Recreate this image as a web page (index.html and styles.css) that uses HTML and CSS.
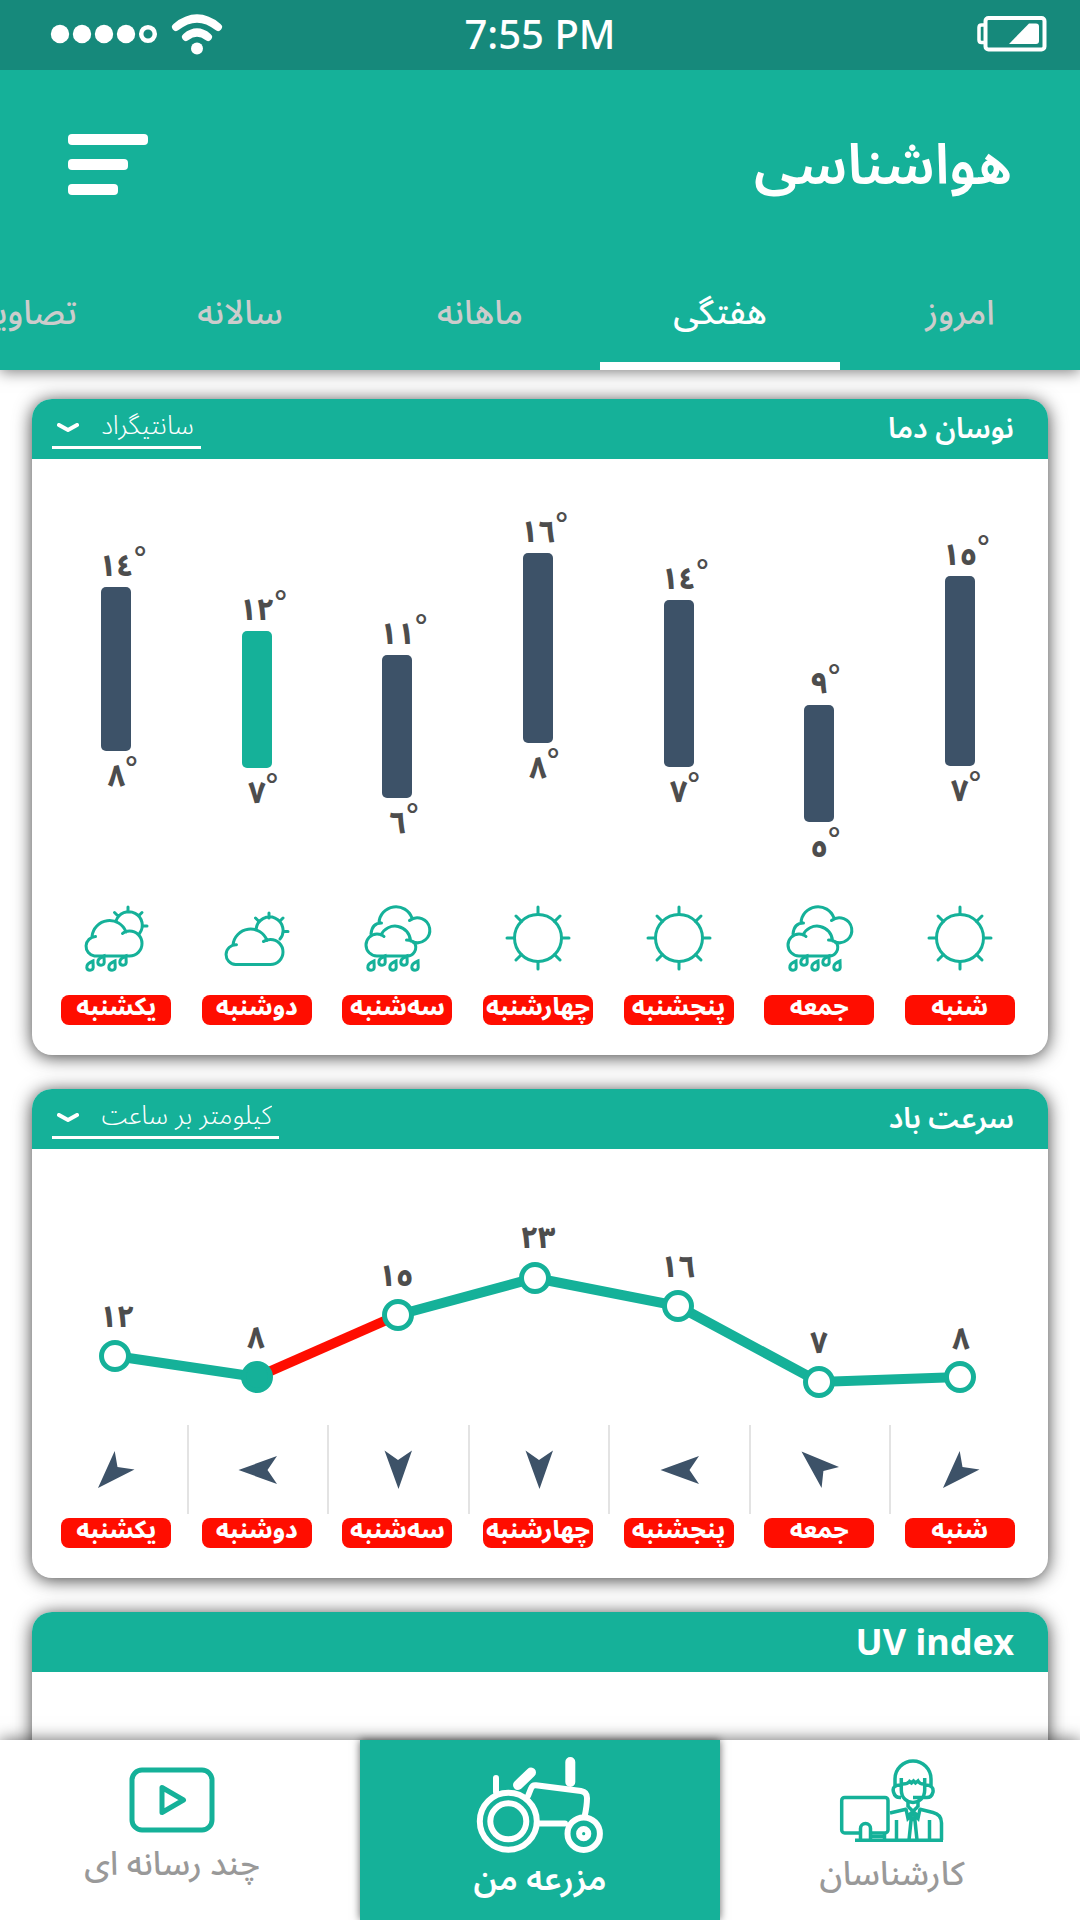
FILE: index.html
```html
<!DOCTYPE html>
<html lang="fa" dir="rtl">
<head>
<meta charset="utf-8">
<meta name="viewport" content="width=device-width, initial-scale=1">
<title>هواشناسی</title>
<link rel="stylesheet" href="styles.css">
</head>
<body>
<svg class="defs" aria-hidden="true">
  <symbol id="drop" viewBox="0 0 12 14" overflow="visible">
    <path d="M8 2C3 4 1.6 6.500 1.800 8.500C2.100 12 8 12 8.200 8.500Z"/>
  </symbol>
  <symbol id="sun" viewBox="0 0 66 66">
    <circle cx="33" cy="33" r="23.500"/>
    <path d="M33 2V9M33 57V64M2 33H9M57 33H64M11 11L16.500 16.500M55 11L49.500 16.500M11 55L16.500 49.500M55 55L49.500 49.500"/>
  </symbol>
  <symbol id="sun-cloud" viewBox="0 0 66 66" overflow="visible">
    <path d="M32.200 23.500A13.500 13.500 0 1 1 56 34M45 8V13M31.500 13L35 16.500M59 13L55.500 16.500M59.500 26.500H64"/>
    <path d="M12.500 39.700A9.900 9.900 0 0 0 11.500 59.500H46.500A12.500 12.500 0 0 0 46.500 34.500Q42 34.500 39.500 36.500M9 40A17.600 17.600 0 0 1 43 35.500"/>
  </symbol>
  <symbol id="sun-rain" viewBox="0 0 66 66" overflow="visible">
    <path d="M33 16A13.500 13.500 0 1 1 56.500 28.500M45 2V7M31.500 7.500L35 11M59 7.500L55.500 11M59.500 21H64"/>
    <path d="M12.500 31.500A9.800 9.800 0 0 0 11.500 51H46.500A12.500 12.500 0 0 0 46.500 26Q42 26 39.500 28.500M9 31.500A17.600 17.600 0 0 1 43 27"/>
    <use href="#drop" x="2" y="54" width="12" height="14"/>
    <use href="#drop" x="13" y="49" width="12" height="14"/>
    <use href="#drop" x="24" y="54" width="12" height="14"/>
    <use href="#drop" x="35" y="49" width="12" height="14"/>
  </symbol>
  <symbol id="rain" viewBox="0 0 66 66" overflow="visible">
    <path d="M17.500 18Q8 18 7 29M15 18A17 17 0 0 1 48 13M45.500 15.500A12.500 12.500 0 1 1 49 37"/>
    <path d="M20 31.500Q17.500 29 13 29A11 11 0 0 0 13 51H43A8.600 8.600 0 0 0 50.500 38Q48 35 42.500 35M17 30A15.500 15.500 0 0 1 46.500 36"/>
    <use href="#drop" x="2" y="54" width="12" height="14"/>
    <use href="#drop" x="13" y="49" width="12" height="14"/>
    <use href="#drop" x="24" y="54" width="12" height="14"/>
    <use href="#drop" x="35" y="49" width="12" height="14"/>
    <use href="#drop" x="46" y="54" width="12" height="14"/>
  </symbol>
  <symbol id="wind-w" viewBox="0 0 40 40"><path d="M.5 20L39 6L29.500 20L39 34Z"/></symbol>
  <symbol id="wind-s" viewBox="0 0 40 40"><path d="M20.500 39L6.500 .500L20 10L34 .500Z"/></symbol>
  <symbol id="wind-sw" viewBox="0 0 40 40"><path d="M2 38L18.700 1L21.500 17L38.500 19.500Z"/></symbol>
  <symbol id="wind-nw" viewBox="0 0 40 40"><path d="M1.500 1.500L39 17L23.400 21L21.600 38Z"/></symbol>
</svg>

<div class="app">
  <div class="status" dir="ltr">
    <div class="status-signal">
      <svg width="110" height="24" viewBox="0 0 110 24" fill="#fff" role="img" aria-label="Signal">
        <circle cx="10" cy="12" r="9.200"/><circle cx="32" cy="12" r="9.200"/><circle cx="54" cy="12" r="9.200"/><circle cx="76" cy="12" r="9.200"/>
        <circle cx="98" cy="12" r="6.800" fill="none" stroke="#fff" stroke-width="4.500"/>
      </svg>
      <svg width="54" height="44" viewBox="0 0 54 44" fill="none" stroke="#fff" stroke-width="8" stroke-linecap="round" role="img" aria-label="Wi-Fi">
        <path d="M6 15Q27 -2 48 15M16 25Q27 16 38 25"/><circle cx="27" cy="36.500" r="6" fill="#fff" stroke="none"/>
      </svg>
    </div>
    <time class="status-time">7:55 PM</time>
    <svg class="status-battery" width="72" height="38" viewBox="0 0 72 38" fill="none" stroke="#fff" stroke-width="4" role="img" aria-label="Battery">
      <rect x="9.500" y="3" width="59" height="31.500" rx="3"/>
      <path d="M9 10H5.500Q3 10 3 12.500V25Q3 27.500 5.500 27.500H9" stroke-width="3.500"/>
      <path d="M33 29L53 8.500H60Q63 8.500 63 11.500V26Q63 29 60 29Z" fill="#fff" stroke="none"/>
    </svg>
  </div>

  <header class="header">
    <div class="header-bar">
      <h1 class="title">هواشناسی</h1>
      <button class="menu" type="button" aria-label="منو"><span class="menu-line"></span><span class="menu-line menu-line-mid"></span><span class="menu-line menu-line-short"></span></button>
    </div>
    <nav class="tabs">
      <a class="tab" href="#today">امروز</a>
      <a class="tab tab-active" href="#week" aria-current="page">هفتگی</a>
      <a class="tab" href="#month">ماهانه</a>
      <a class="tab" href="#year">سالانه</a>
      <a class="tab tab-last" href="#images">تصاویر</a>
    </nav>
  </header>

  <main class="content">
    <section class="card">
      <div class="card-head">
        <h2 class="card-title">نوسان دما</h2>
        <div class="unit">
          <select class="unit-select" aria-label="واحد دما"><option>سانتیگراد</option></select>
          <svg class="unit-arrow" viewBox="0 0 22 10" aria-hidden="true"><path d="M2 2L11 7L20 2"/></svg>
        </div>
      </div>
      <ul class="days">
        <li class="day"><div class="range" style="padding-top:82px"><span class="temp">١٥<span class="deg">°</span></span><span class="bar" style="height:190px"></span><span class="temp">٧<span class="deg">°</span></span></div><svg class="sky"><use href="#sun"/></svg><span class="pill">شنبه</span></li>
        <li class="day"><div class="range" style="padding-top:211px"><span class="temp">٩<span class="deg">°</span></span><span class="bar" style="height:117px"></span><span class="temp">٥<span class="deg">°</span></span></div><svg class="sky"><use href="#rain"/></svg><span class="pill">جمعه</span></li>
        <li class="day"><div class="range" style="padding-top:106px"><span class="temp">١٤<span class="deg">°</span></span><span class="bar" style="height:167px"></span><span class="temp">٧<span class="deg">°</span></span></div><svg class="sky"><use href="#sun"/></svg><span class="pill">پنجشنبه</span></li>
        <li class="day"><div class="range" style="padding-top:59px"><span class="temp">١٦<span class="deg">°</span></span><span class="bar" style="height:190px"></span><span class="temp">٨<span class="deg">°</span></span></div><svg class="sky"><use href="#sun"/></svg><span class="pill">چهارشنبه</span></li>
        <li class="day"><div class="range" style="padding-top:161px"><span class="temp">١١<span class="deg">°</span></span><span class="bar" style="height:143px"></span><span class="temp">٦<span class="deg">°</span></span></div><svg class="sky"><use href="#rain"/></svg><span class="pill">سه‌شنبه</span></li>
        <li class="day"><div class="range" style="padding-top:137px"><span class="temp">١٢<span class="deg">°</span></span><span class="bar bar-now" style="height:137px"></span><span class="temp">٧<span class="deg">°</span></span></div><svg class="sky"><use href="#sun-cloud"/></svg><span class="pill">دوشنبه</span></li>
        <li class="day"><div class="range" style="padding-top:93px"><span class="temp">١٤<span class="deg">°</span></span><span class="bar" style="height:164px"></span><span class="temp">٨<span class="deg">°</span></span></div><svg class="sky"><use href="#sun-rain"/></svg><span class="pill">یکشنبه</span></li>
      </ul>
    </section>

    <section class="card">
      <div class="card-head">
        <h2 class="card-title">سرعت باد</h2>
        <div class="unit">
          <select class="unit-select" aria-label="واحد سرعت باد"><option>کیلومتر بر ساعت</option></select>
          <svg class="unit-arrow" viewBox="0 0 22 10" aria-hidden="true"><path d="M2 2L11 7L20 2"/></svg>
        </div>
      </div>
      <svg class="wind-chart" viewBox="0 0 1016 276" role="img" aria-label="سرعت باد">
        <path class="wind-line" d="M83 207L225 228M366 166L503 129L646 157L787 233L928 228"/>
        <path class="wind-line wind-line-now" d="M225 228L366 166"/>
        <g class="wind-dots">
          <circle cx="83" cy="207" r="13.500"/><circle class="wind-dot-now" cx="225" cy="228" r="13.500"/><circle cx="366" cy="166" r="13.500"/><circle cx="503" cy="129" r="13.500"/><circle cx="646" cy="157" r="13.500"/><circle cx="787" cy="233" r="13.500"/><circle cx="928" cy="228" r="13.500"/>
        </g>
        <g class="wind-values">
          <text x="85" y="178">١٢</text><text x="224" y="199">٨</text><text x="364" y="137">١٥</text><text x="506" y="99">٢٣</text><text x="646" y="128">١٦</text><text x="787" y="204">٧</text><text x="929" y="200">٨</text>
        </g>
      </svg>
      <ul class="days">
        <li class="day"><div class="wind"><svg class="wind-arrow"><use href="#wind-sw"/></svg></div><span class="pill">شنبه</span></li>
        <li class="day"><div class="wind"><svg class="wind-arrow"><use href="#wind-nw"/></svg></div><span class="pill">جمعه</span></li>
        <li class="day"><div class="wind"><svg class="wind-arrow"><use href="#wind-w"/></svg></div><span class="pill">پنجشنبه</span></li>
        <li class="day"><div class="wind"><svg class="wind-arrow"><use href="#wind-s"/></svg></div><span class="pill">چهارشنبه</span></li>
        <li class="day"><div class="wind"><svg class="wind-arrow"><use href="#wind-s"/></svg></div><span class="pill">سه‌شنبه</span></li>
        <li class="day"><div class="wind"><svg class="wind-arrow"><use href="#wind-w"/></svg></div><span class="pill">دوشنبه</span></li>
        <li class="day"><div class="wind"><svg class="wind-arrow"><use href="#wind-sw"/></svg></div><span class="pill">یکشنبه</span></li>
      </ul>
    </section>

    <section class="card card-uv">
      <div class="card-head"><h2 class="card-title card-title-latin">UV index</h2></div>
    </section>
  </main>

  <nav class="bottom">
    <a class="bottom-item" href="#experts">
      <svg width="110" height="86" viewBox="5 5 110 86" fill="none" stroke="#15b199" stroke-width="3.500" aria-hidden="true">
        <path d="M63 34V27A18 18 0 0 1 99 27V34M69.300 26V38C69.300 54.500 92.700 54.500 92.700 38V26M69 33Q59.500 33 61.500 40Q63 46 69 45.500M81 45.500H94Q99.500 46 101 40Q102 33 93 33"/>
        <path d="M69.300 32Q75 32.500 77.500 29.500L79.500 31L81.500 29L83.500 31L86 29Q88 32.500 92.700 32"/>
        <path d="M58 61L75 57M76 50V55M86 50V55M87 57L101 60.500Q109.500 62.500 109.500 71V88M64.500 68V88M97.500 68V88"/>
        <path d="M74 57L76 66.500L81 61.500L86 66.500L88 57M76 54.500L86 64M86 54.500L76 64M79.500 64L77 88M82.500 64L85 88M78 67.500H84"/>
        <rect x="9.700" y="45.400" width="46.300" height="35.500" rx="3"/>
        <path d="M52.500 81V88M40 84.500H52"/>
        <path fill="#fff" d="M28.500 88V76.500A5 5 0 0 1 38.500 76.500V88"/>
        <path d="M23 88.300H111"/>
      </svg>
      <span>کارشناسان</span>
    </a>
    <a class="bottom-item bottom-active" href="#farm" aria-current="page">
      <svg width="130" height="98" viewBox="10 6 130 98" fill="none" stroke="#fff" stroke-width="6" stroke-linecap="round" aria-hidden="true">
        <circle cx="43.300" cy="71.300" r="28.500"/><circle cx="43.300" cy="71.300" r="18"/>
        <circle cx="118.700" cy="83.700" r="16.200"/><circle cx="118.700" cy="83.700" r="4.600"/>
        <path d="M31 28V42M63 46L66 38.500Q67.500 34.800 71 35.300L116 41Q122 42 122 48Q122 56 119.500 67M74 73.500H100"/>
        <path stroke-width="10" d="M53 35L66 22.500M105.300 12V32"/>
      </svg>
      <span>مزرعه من</span>
    </a>
    <a class="bottom-item" href="#media">
      <svg width="86" height="66" viewBox="0 0 86 66" fill="none" stroke="#15b199" stroke-width="5" stroke-linejoin="round" aria-hidden="true">
        <rect x="3" y="3" width="80" height="60" rx="10"/><path d="M33 20.500V45.500L54.500 33Z"/>
      </svg>
      <span>چند رسانه ای</span>
    </a>
  </nav>
</div>
</body>
</html>
```
FILE: styles.css
```css
:root {
  --green: #15b199;
  --navy: #3d5268;
  --red: #ff0d00;
  --ink: #4d4d4d;
}

* {
  box-sizing: border-box;
}

body {
  margin: 0;
  background: #fff;
  font-family: "Noto Sans Arabic", "Noto Sans", "DejaVu Sans", sans-serif;
}

h1,
h2,
ul {
  margin: 0;
  padding: 0;
}

.defs {
  display: none;
}

.app {
  display: flex;
  flex-direction: column;
  height: 100vh;
}

/* Status bar */
.status {
  position: relative;
  z-index: 2;
  display: grid;
  grid-template-columns: 1fr auto 1fr;
  align-items: center;
  flex: none;
  height: 70px;
  padding: 0 32px 2px 50px;
  background: #16897b;
  color: #fff;
}

.status-signal {
  display: flex;
  align-items: center;
  gap: 10px;
}

.status-time {
  padding-right: 18px;
  font: 500 40px/64px "Noto Sans", sans-serif;
}

.status-battery {
  justify-self: end;
}

/* Header */
.header {
  position: relative;
  z-index: 1;
  flex: none;
  background: var(--green);
  box-shadow: 0 2px 14px rgba(0, 0, 0, 0.5);
}

.header-bar {
  display: flex;
  align-items: center;
  justify-content: space-between;
  height: 188px;
  padding: 0 68px;
}

.title {
  padding-top: 4px;
  color: #fff;
  font-size: 56px;
  font-weight: 600;
  line-height: 80px;
}

.menu {
  display: flex;
  flex-direction: column;
  align-items: flex-end;
  gap: 14px;
  padding: 0;
  border: 0;
  background: none;
}

.menu-line {
  width: 80px;
  height: 11px;
  border-radius: 4px;
  background: #fff;
}

.menu-line-mid {
  width: 60px;
}

.menu-line-short {
  width: 50px;
}

.tabs {
  display: flex;
  overflow: hidden;
}

.tab {
  flex: 0 0 240px;
  height: 112px;
  border-bottom: 8px solid transparent;
  color: #ccc;
  font-size: 34px;
  font-weight: 500;
  line-height: 110px;
  text-align: center;
  text-decoration: none;
}

.tab-active {
  border-color: #fff;
  color: #fff;
}

.tab-last {
  padding-right: 43px;
  text-align: start;
}

/* Cards */
.content {
  display: flex;
  flex: 1;
  flex-direction: column;
  gap: 34px;
  min-height: 0;
  overflow: hidden;
  padding: 29px 32px 0;
}

.card {
  flex: none;
  border-radius: 20px;
  background: #fff;
  box-shadow: 0 2px 18px rgba(0, 0, 0, 0.75);
}

.card-uv {
  height: 400px;
}

.card-head {
  display: flex;
  align-items: center;
  justify-content: space-between;
  height: 60px;
  padding: 0 34px 0 20px;
  border-radius: 20px 20px 0 0;
  background: var(--green);
  color: #fff;
}

.card-title {
  font-size: 29px;
  font-weight: 600;
  line-height: 60px;
}

.card-title-latin {
  font-family: "Noto Sans", sans-serif;
  font-size: 36px;
  font-weight: 700;
}

.unit {
  display: grid;
  align-items: center;
  height: 40px;
  border-bottom: 3px solid #fff;
}

.unit-select {
  grid-area: 1 / 1;
  height: 36px;
  padding: 0 7px 4px 49px;
  border: 0;
  appearance: none;
  background: none;
  color: #fff;
  font-family: inherit;
  font-size: 26px;
  font-weight: 300;
  line-height: 30px;
}

.unit-arrow {
  grid-area: 1 / 1;
  justify-self: end;
  width: 22px;
  height: 10px;
  margin-left: 5px;
  fill: none;
  stroke: #fff;
  stroke-width: 4px;
  stroke-linecap: round;
  stroke-linejoin: round;
  pointer-events: none;
}

.days {
  display: grid;
  grid-template-columns: repeat(7, 1fr);
  padding: 0 18px 30px 14px;
  list-style: none;
}

.day {
  display: flex;
  flex-direction: column;
  align-items: center;
}

.pill {
  width: 110px;
  height: 30px;
  border-radius: 8px;
  background: var(--red);
  color: #fff;
  font-size: 24px;
  font-weight: 800;
  line-height: 26px;
  text-align: center;
  white-space: nowrap;
}

/* Temperature ranges */
.range {
  display: flex;
  flex-direction: column;
  align-items: center;
  height: 446px;
}

.temp {
  position: relative;
  color: var(--ink);
  font-size: 30px;
  font-weight: 800;
  line-height: 30px;
}

.deg {
  position: absolute;
  top: -7px;
  left: 100%;
  font-weight: 500;
}

.bar {
  width: 30px;
  margin: 5px 0 11px;
  border-radius: 5px;
  background: var(--navy);
}

.bar-now {
  background: var(--green);
}

.sky {
  width: 66px;
  height: 66px;
  margin-bottom: 24px;
  overflow: visible;
  fill: none;
  stroke: var(--green);
  stroke-width: 3px;
  stroke-linecap: round;
}

/* Wind */
.wind-chart {
  display: block;
  width: 100%;
}

.wind-line {
  fill: none;
  stroke: var(--green);
  stroke-width: 10px;
}

.wind-line-now {
  stroke: var(--red);
}

.wind-dots {
  fill: #fff;
  stroke: var(--green);
  stroke-width: 5px;
}

.wind-dot-now {
  fill: var(--green);
}

.wind-values {
  fill: var(--ink);
  font-size: 30px;
  font-weight: 800;
  text-anchor: middle;
}

.wind {
  display: flex;
  align-items: center;
  justify-content: center;
  width: 100%;
  height: 89px;
  margin-bottom: 4px;
  border-left: 2px solid #e3e3e3;
}

.day:last-child .wind {
  border-left: 0;
}

.wind-arrow {
  width: 40px;
  height: 40px;
  fill: var(--navy);
}

/* Bottom navigation */
.bottom {
  position: relative;
  z-index: 1;
  display: grid;
  grid-template-columns: repeat(3, 1fr);
  flex: none;
  height: 180px;
  background: #fff;
  box-shadow: 0 0 16px rgba(0, 0, 0, 0.6);
}

.bottom-item {
  display: flex;
  flex-direction: column;
  align-items: center;
  justify-content: center;
  gap: 10px;
  padding: 0 0 6px;
  color: #999;
  font-size: 33px;
  font-weight: 500;
  line-height: 44px;
  text-decoration: none;
}

.bottom-item:not(.bottom-active) {
  padding-right: 16px;
}

.bottom-active {
  gap: 4px;
  padding-bottom: 2px;
  background: var(--green);
  box-shadow: 0 0 8px rgba(0, 0, 0, 0.6);
  color: #fff;
  font-weight: 600;
}
```
